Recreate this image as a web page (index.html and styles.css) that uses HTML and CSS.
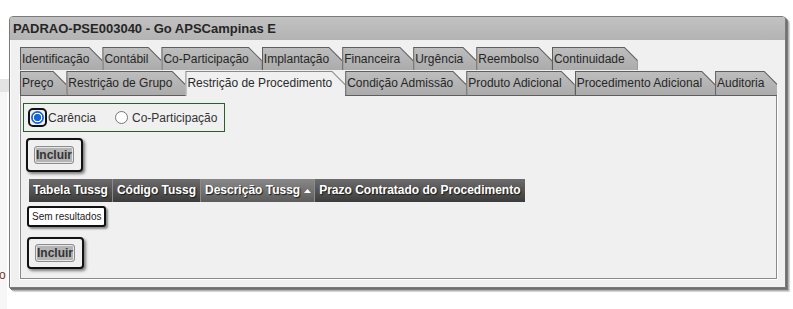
FILE: index.html
```html
<!DOCTYPE html>
<html lang="pt">
<head>
<meta charset="utf-8">
<title>PADRAO-PSE003040</title>
<link rel="stylesheet" href="styles.css">
</head>
<body>
<div class="page">
  <div class="side">
    <div class="side-block"></div>
    <div class="side-strip"><span class="side-text">o</span></div>
  </div>
</div>

<div class="dialog">
  <div class="titlebar">PADRAO-PSE003040 - Go APSCampinas E</div>
  <div class="dbody">
    <div class="tabrow row1">
      <span class="tab"><span class="tab-in">Identificação</span></span>
      <span class="tab"><span class="tab-in">Contábil</span></span>
      <span class="tab"><span class="tab-in">Co-Participação</span></span>
      <span class="tab"><span class="tab-in">Implantação</span></span>
      <span class="tab"><span class="tab-in">Financeira</span></span>
      <span class="tab"><span class="tab-in">Urgência</span></span>
      <span class="tab"><span class="tab-in">Reembolso</span></span>
      <span class="tab"><span class="tab-in">Continuidade</span></span>
    </div>
    <div class="tabrow row2">
      <span class="tab"><span class="tab-in">Preço</span></span>
      <span class="tab"><span class="tab-in">Restrição de Grupo</span></span>
      <span class="tab active"><span class="tab-in">Restrição de Procedimento</span></span>
      <span class="tab"><span class="tab-in">Condição Admissão</span></span>
      <span class="tab"><span class="tab-in">Produto Adicional</span></span>
      <span class="tab"><span class="tab-in">Procedimento Adicional</span></span>
      <span class="tab"><span class="tab-in">Auditoria</span></span>
    </div>

    <div class="panel">
      <div class="radiobox">
        <label class="radio">
          <span class="focus-ring"><span class="rdot checked"></span></span>
          <span class="rlabel">Carência</span>
        </label>
        <label class="radio second">
          <span class="rdot"></span>
          <span class="rlabel">Co-Participação</span>
        </label>
      </div>

      <div class="btnframe first"><button class="btn" type="button">Incluir</button></div>

      <div class="grid-head">
        <div class="th">Tabela Tussg</div>
        <div class="th">Código Tussg</div>
        <div class="th sorted">Descrição Tussg<svg class="sort" width="7" height="4" viewBox="0 0 7 4"><polygon points="0,4 3.5,0 7,4" fill="#fff"/></svg></div>
        <div class="th">Prazo Contratado do Procedimento</div>
      </div>

      <div class="empty">Sem resultados</div>

      <div class="btnframe second"><button class="btn" type="button">Incluir</button></div>
    </div>
  </div>
</div>
</body>
</html>
```

FILE: styles.css
```css
html, body {
  margin: 0;
  padding: 0;
  background: #ffffff;
  font-family: "Liberation Sans", Arial, sans-serif;
}

/* underlying page (partly hidden by the dialog) */
.page {
  display: flex;
  height: 309px;
  overflow: hidden;
}
.side {
  width: 9px;
  padding-top: 79px;
}
.side-block {
  height: 13px;
  background: #e4e4e4;
}
.side-strip {
  width: 7px;
  height: 217px;
  background: #f6f6f6;
  padding-top: 176px;
  box-sizing: border-box;
  overflow: hidden;
}
.side-text {
  display: block;
  font-size: 12px;
  line-height: 14px;
  color: #7a3320;
  margin-left: -1px;
}

/* dialog window (overlays the page) */
.dialog {
  position: absolute;
  left: 9px;
  top: 16px;
  width: 777px;
  box-sizing: border-box;
  border: 1px solid #7a7a7a;
  border-radius: 4px 4px 0 0;
  background: #f0f0f0;
  box-shadow: 1px 1px 0 #6e6e6e, 2px 2px 0 #7c7c7c, 3px 3px 1px #b0b0b0, 4px 4px 1px #d8d8d8;
}
.titlebar {
  height: 23px;
  line-height: 23px;
  padding-left: 3px;
  background: linear-gradient(#c2c2c2, #b3b3b3);
  border-radius: 3px 3px 0 0;
  font-size: 13px;
  font-weight: bold;
  color: #262626;
  white-space: nowrap;
}
.dbody {
  display: flex;
  flex-direction: column;
  padding: 7px 8px 8px 10px;
  box-shadow: inset 1px 0 0 #fafafa;
}

/* tabs */
.tabrow {
  display: flex;
  align-items: flex-start;
}
.row1 {
  margin-bottom: 1px;
}
.row2 {
  margin-bottom: -1px;
  position: relative;
  z-index: 1;
}
.tab {
  display: flex;
  background: #5e5e5e;
  padding: 1px 0 0 1px;
  clip-path: polygon(0 0, calc(100% - 13px) 0, 100% 13px, 100% 100%, 0 100%);
  font-size: 12px;
  line-height: 14px;
  color: #262626;
  white-space: nowrap;
}
.tab-in {
  display: block;
  background: linear-gradient(#bdbdbd, #ababab);
  padding: 4px 13px 4px 1px;
  clip-path: polygon(0 0, calc(100% - 13.4px) 0, 100% 13.4px, 100% 100%, 0 100%);
}
.row2 .tab {
  padding-bottom: 1px;
}
.row2 .tab-in {
  padding-bottom: 5px;
}
.row2 .tab.active {
  background: #8a8a8a;
  padding-bottom: 0;
}
.row2 .tab.active .tab-in {
  background: #f0f0f0;
  padding-bottom: 6px;
  color: #2a2a2a;
}

/* content panel */
.panel {
  height: 184px;
  box-sizing: border-box;
  border: 1px solid #8b8b8b;
  box-shadow: 0 0 0 1px #ffffff;
  background: #f0f0f0;
  display: flex;
  flex-direction: column;
  align-items: flex-start;
}

.radiobox {
  margin: 7px 0 0 2px;
  width: 202px;
  height: 29px;
  box-sizing: border-box;
  border: 1px solid #2a5e2a;
  display: flex;
  align-items: center;
  padding-left: 4px;
  font-size: 12px;
  color: #333;
}
.radio {
  display: flex;
  align-items: center;
}
.radio.second {
  margin-left: 19px;
}
.radio.second .rlabel {
  margin-left: 4px;
}
.focus-ring {
  width: 19px;
  height: 19px;
  box-sizing: border-box;
  border: 2px solid #111;
  border-radius: 5px;
  display: flex;
  align-items: center;
  justify-content: center;
}
.rdot {
  width: 13px;
  height: 13px;
  box-sizing: border-box;
  border-radius: 50%;
  border: 1px solid #767676;
  background: #fff;
}
.rdot.checked {
  border: none;
  background: radial-gradient(circle, #1565d8 0 3.4px, #ffffff 3.9px 4.6px, #1565d8 5.1px);
}
.rlabel {
  margin-left: 1px;
}

/* button frames */
.btnframe {
  display: flex;
  border: 2px solid #121212;
  border-radius: 4px;
  background: #f0f0f0;
  box-shadow: 2px 2px 3px #7c7c7c;
  padding: 6px 7px 6px 6px;
}
.btnframe.first {
  margin: 6px 0 0 5px;
}
.btnframe.second {
  margin: 10px 0 0 6px;
  padding-top: 5px;
  padding-bottom: 5px;
}
.btn {
  font-family: "Liberation Sans", Arial, sans-serif;
  font-size: 12px;
  font-weight: bold;
  line-height: 14px;
  color: #333;
  background: #b4b4b4;
  border: 1px solid #8c8c8c;
  box-shadow: inset 0 0 0 1px #e6e6e6;
  border-radius: 3px;
  padding: 1px 1px;
  margin: 0;
}

/* grid header */
.grid-head {
  display: flex;
  margin: 7px 0 0 8px;
}
.th {
  display: flex;
  align-items: baseline;
  padding: 4px 4px 5px;
  font-size: 12px;
  line-height: 14px;
  font-weight: bold;
  color: #ffffff;
  text-shadow: 1px 1px 1px #1a1a1a;
  background: linear-gradient(#6c6c6c, #3c3c3c);
  border-left: 1px solid #8a8a8a;
  white-space: nowrap;
}
.th:first-child {
  border-left: none;
}
.th.sorted {
  background: linear-gradient(#888888, #5c5c5c);
  padding-right: 3px;
}
.sort {
  margin-left: 4px;
  align-self: flex-end;
  margin-bottom: 4px;
}

.empty {
  margin: 4px 0 0 6px;
  border: 2px solid #111;
  border-radius: 3px;
  background: #ffffff;
  box-shadow: 2px 2px 2px #8a8a8a;
  padding: 2px 3px;
  font-size: 10px;
  line-height: 13px;
  color: #222;
  white-space: nowrap;
}
```
